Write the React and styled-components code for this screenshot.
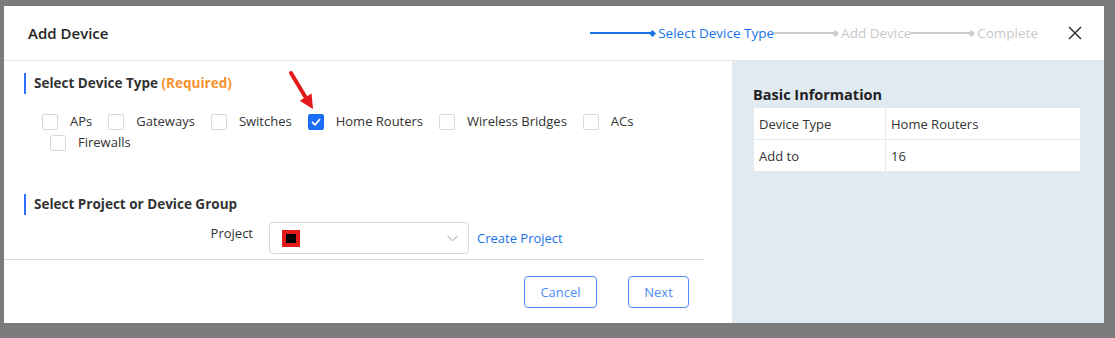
import React from 'react';
import styled, { createGlobalStyle } from 'styled-components';

const GlobalStyle = createGlobalStyle`
  html, body {
    margin: 0;
    padding: 0;
    background: #7b7b7b;
  }
  body {
    font-family: "Open Sans", "Noto Sans", Arial, sans-serif;
    color: #333;
  }
`;

const Page = styled.div`
  width: 1115px;
  height: 338px;
  padding: 6px 0 0 4px;
  box-sizing: border-box;
  overflow: hidden;
`;

const Modal = styled.div`
  position: relative;
  width: 1100px;
  height: 317px;
  background: #fff;
  display: flex;
  flex-direction: column;
`;

const Header = styled.div`
  height: 54px;
  flex: none;
  display: flex;
  align-items: center;
  padding: 0 22px 0 24px;
  border-bottom: 1px solid #e6e6e6;
`;

const Title = styled.div`
  font-size: 15px;
  font-weight: 600;
  color: #262626;
`;

const Stepper = styled.div`
  margin-left: auto;
  display: flex;
  align-items: center;
  margin-right: 30px;
`;

const Step = styled.div`
  display: flex;
  align-items: center;
  font-size: 13.5px;
  color: ${p => (p.active ? '#1a73e8' : '#c8c8c8')};
`;

const StepLine = styled.span`
  width: ${p => p.w}px;
  height: 2px;
  background: ${p => (p.active ? '#1a73e8' : '#cccccc')};
`;

const Diamond = styled.span`
  width: 5px;
  height: 5px;
  margin-left: -2px;
  margin-right: 3px;
  transform: rotate(45deg);
  background: ${p => (p.active ? '#1a73e8' : '#cccccc')};
`;

const CloseButton = styled.button`
  border: none;
  background: none;
  padding: 0;
  width: 14px;
  height: 14px;
  display: flex;
  cursor: pointer;
`;

const Body = styled.div`
  flex: 1;
  display: flex;
  min-height: 0;
`;

const Main = styled.div`
  width: 728px;
  flex: none;
  display: flex;
  flex-direction: column;
`;

const Content = styled.div`
  padding: 12px 0 0 20px;
  height: 199px;
  box-sizing: border-box;
  margin-right: 28px;
  border-bottom: 1px solid #d9d9d9;
`;

const SectionTitle = styled.div`
  border-left: 2px solid #3370ff;
  height: 21px;
  line-height: 21px;
  padding-left: 8px;
  font-size: 13.5px;
  font-weight: 700;
  color: #333;
  margin-top: ${p => p.mt || 0}px;
`;

const Required = styled.span`
  color: #f5922f;
`;

const CheckList = styled.div`
  margin-top: 17px;
  padding-left: 26px;
  text-indent: -8px;
  line-height: 21px;
  width: 640px;
`;

const CheckItem = styled.label`
  display: inline-flex;
  align-items: center;
  text-indent: 0;
  margin-right: 16px;
  font-size: 13px;
  color: #333;
  vertical-align: top;
  height: 21px;
`;

const Box = styled.span`
  width: 14px;
  height: 14px;
  border: 1px solid ${p => (p.checked ? '#1a6ef5' : '#d5d9e0')};
  background: ${p => (p.checked ? '#1a6ef5' : '#fff')};
  border-radius: 2px;
  margin-right: 12px;
  display: flex;
  align-items: center;
  justify-content: center;
`;

const FormRow = styled.div`
  display: flex;
  align-items: center;
  margin-top: 7px;
`;

const FormLabel = styled.div`
  width: 245px;
  text-align: right;
  font-size: 13px;
  color: #333;
  padding-right: 16px;
  box-sizing: border-box;
  align-self: flex-start;
  padding-top: 2px;
`;

const Select = styled.div`
  width: 200px;
  height: 32px;
  box-sizing: border-box;
  border: 1px solid #d9d9d9;
  border-radius: 4px;
  display: flex;
  align-items: center;
  padding: 0 10px 0 12px;
`;

const ProjectIcon = styled.span`
  width: 10px;
  height: 9px;
  background: #000;
  border: 4px solid #e41b1b;
  margin-top: 1px;
`;

const Chevron = styled.svg`
  margin-left: auto;
`;

const Link = styled.a`
  margin-left: 8px;
  font-size: 13px;
  color: #1a73e8;
  text-decoration: none;
`;

const Footer = styled.div`
  display: flex;
  justify-content: flex-end;
  gap: 31px;
  padding: 16px 43px 0 0;
`;

const OutlineButton = styled.button`
  height: 32px;
  width: ${p => p.w}px;
  border: 1px solid #4d8df5;
  border-radius: 4px;
  background: #fff;
  color: #4d8df5;
  font-family: inherit;
  font-size: 13px;
  padding: 0;
`;

const Side = styled.div`
  flex: 1;
  background: #e1e9f1;
  padding: 24px 23px 0 21px;
`;

const SideTitle = styled.div`
  font-size: 14.5px;
  font-weight: 700;
  color: #222;
  line-height: 20px;
  margin-bottom: 2px;
`;

const InfoTable = styled.table`
  width: 100%;
  border-collapse: collapse;
  background: #fff;
  font-size: 13px;
  color: #333;

  td {
    height: 32px;
    padding: 0 0 0 5px;
    border: 1px solid #e1e9f1;
    box-sizing: border-box;
  }
  td:first-child {
    width: 132px;
  }
`;

const Arrow = styled.svg`
  position: absolute;
  left: 278px;
  top: 57px;
`;

const types = ['APs', 'Gateways', 'Switches', 'Home Routers', 'Wireless Bridges', 'ACs', 'Firewalls'];

const steps = [
  { label: 'Select Device Type', active: true, w: 62 },
  { label: 'Add Device', w: 61 },
  { label: 'Complete', w: 60 },
];

export default function App() {
  return (
    <>
      <GlobalStyle />
      <Page>
        <Modal>
          <Header>
            <Title>Add Device</Title>
            <Stepper>
              {steps.map(s => (
                <Step key={s.label} active={s.active}>
                  <StepLine w={s.w} active={s.active} />
                  <Diamond active={s.active} />
                  {s.label}
                </Step>
              ))}
            </Stepper>
            <CloseButton>
              <svg width="14" height="14" viewBox="0 0 14 14">
                <path d="M1 1 L13 13 M13 1 L1 13" stroke="#333" strokeWidth="1.5" fill="none" />
              </svg>
            </CloseButton>
          </Header>
          <Body>
            <Main>
              <Content>
                <SectionTitle>
                  Select Device Type <Required>(Required)</Required>
                </SectionTitle>
                <CheckList>
                  {types.map(t => {
                    const checked = t === 'Home Routers';
                    return (
                      <CheckItem key={t}>
                        <Box checked={checked}>
                          {checked && (
                            <svg width="10" height="8" viewBox="0 0 10 8">
                              <path d="M1 4 L4 6.8 L9 1.2" stroke="#fff" strokeWidth="1.8" fill="none" />
                            </svg>
                          )}
                        </Box>
                        {t}
                      </CheckItem>
                    );
                  })}
                </CheckList>
                <SectionTitle mt={41}>Select Project or Device Group</SectionTitle>
                <FormRow>
                  <FormLabel>Project</FormLabel>
                  <Select>
                    <ProjectIcon />
                    <Chevron width="11" height="7" viewBox="0 0 11 7">
                      <path d="M0.5 0.8 L5.5 5.8 L10.5 0.8" stroke="#999" strokeWidth="1" fill="none" />
                    </Chevron>
                  </Select>
                  <Link>Create Project</Link>
                </FormRow>
              </Content>
              <Footer>
                <OutlineButton w={73}>Cancel</OutlineButton>
                <OutlineButton w={61}>Next</OutlineButton>
              </Footer>
            </Main>
            <Side>
              <SideTitle>Basic Information</SideTitle>
              <InfoTable>
                <tbody>
                  <tr>
                    <td>Device Type</td>
                    <td>Home Routers</td>
                  </tr>
                  <tr>
                    <td>Add to</td>
                    <td>16</td>
                  </tr>
                </tbody>
              </InfoTable>
            </Side>
          </Body>
          <Arrow width="32" height="48" viewBox="0 0 32 48">
            <path d="M9 10 L24 35" stroke="#e3191b" strokeWidth="4" strokeLinecap="round" />
            <polygon points="31,46 17.7,37.7 29.6,30.5" fill="#e3191b" />
          </Arrow>
        </Modal>
      </Page>
    </>
  );
}
